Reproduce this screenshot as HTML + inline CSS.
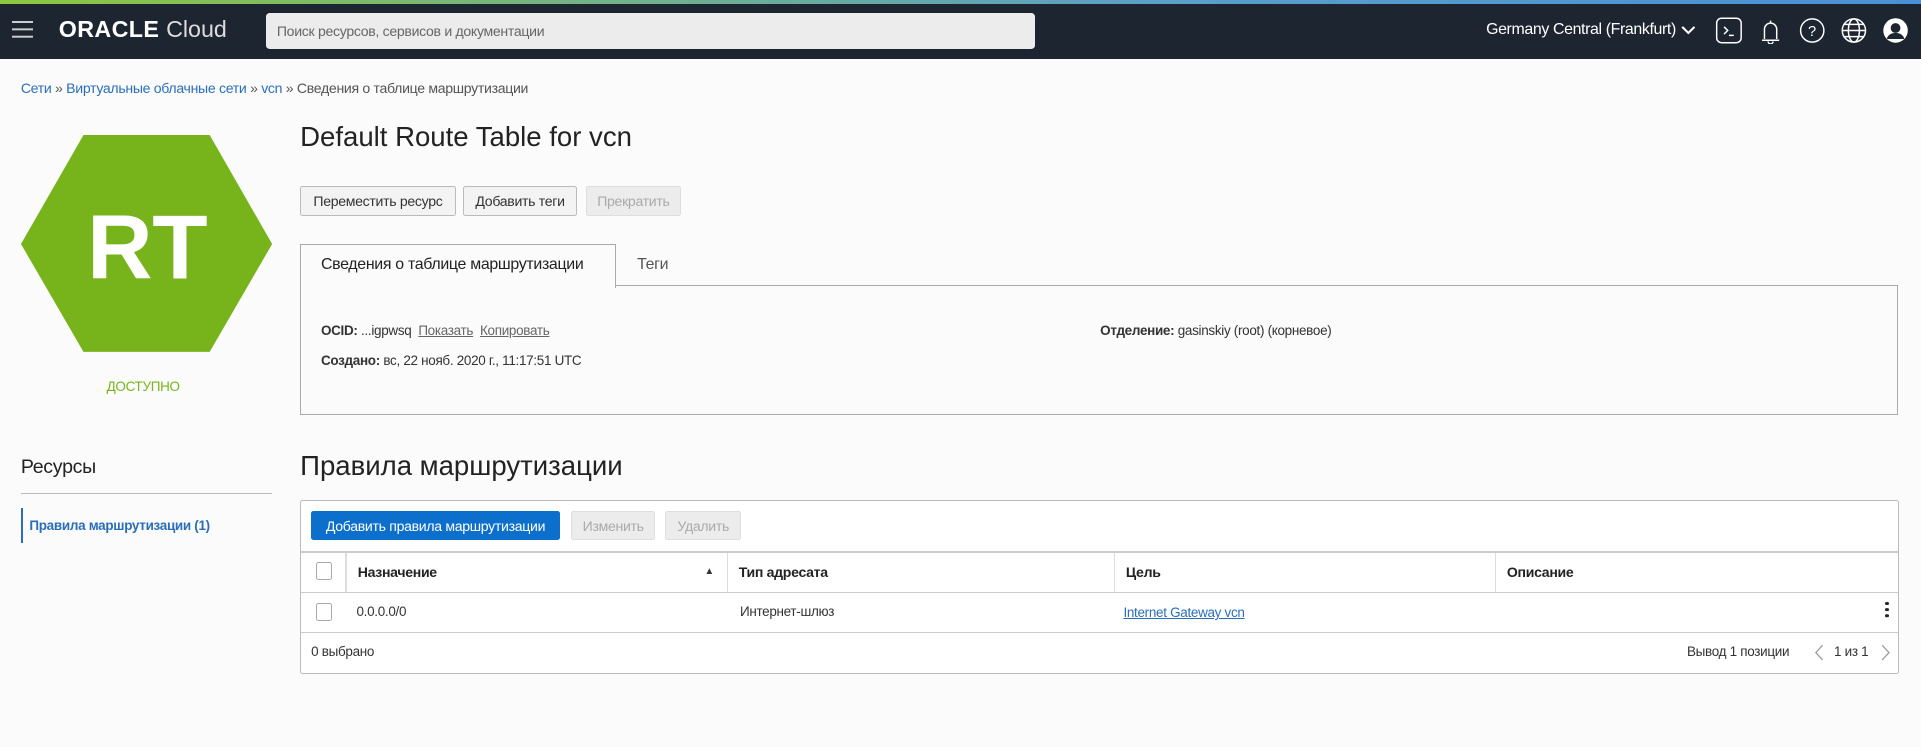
<!DOCTYPE html>
<html><head><meta charset="utf-8"><style>
html,body{margin:0;padding:0;}
body{width:1568px;height:610px;zoom:1.22513;background:#fbfbfb;font-family:"Liberation Sans",Arial,sans-serif;color:#333;position:relative;overflow:hidden;font-size:12px;letter-spacing:-0.25px;}
.a{position:absolute;white-space:nowrap;}
.topline{left:0;top:0;width:1568px;height:3px;background:linear-gradient(90deg,#8cc63f,#5aa0c8 60%,#4b8fd6);}
.hdr{left:0;top:3px;width:1568px;height:45px;background:#1d2531;}
.search{left:217px;top:11px;width:628px;height:29px;background:#ececec;border-radius:3px;}
.btn{position:absolute;height:24px;box-sizing:border-box;border:1px solid #bbb;border-radius:2px;background:#f3f3f3;color:#333;font-size:11.5px;display:flex;align-items:center;justify-content:center;white-space:nowrap;}
.dis{color:#aaa;background:#ececec;border-color:#ddd;}
.link{color:#2a6ebb;}
.th{font-weight:bold;font-size:11.5px;color:#222;}
.cb{position:absolute;width:11px;height:13px;border:1px solid #aaa;border-radius:2px;background:#fff;}
</style></head><body>
<div class="a topline"></div>
<div class="a hdr"></div>
<div class="a" style="left:10px;top:17px;width:17px;height:1.5px;background:#ccc;box-shadow:0 6px 0 #ccc,0 12px 0 #ccc"></div>
<div class="a" style="left:48px;top:13px;color:#fff;font-size:19px;letter-spacing:0.3px"><b style="font-weight:bold">ORACLE</b> <span style="font-size:19px;color:#ddd;letter-spacing:0">Cloud</span></div>
<div class="a search"></div>
<div class="a" style="left:226px;top:19px;color:#666;font-size:11.5px;">Поиск ресурсов, сервисов и документации</div>
<div class="a" style="left:1213px;top:17px;color:#fff;font-size:13px;letter-spacing:-0.3px">Germany Central (Frankfurt)</div>
<svg class="a" style="left:1372px;top:20px" width="12" height="9"><path d="M1 1.5l5 5 5-5" stroke="#fff" stroke-width="1.7" fill="none"/></svg>
<svg class="a" style="left:1398px;top:14px" width="170" height="22" fill="none" stroke="#fff" stroke-width="1.2">
<rect x="3" y="1" width="20" height="20" rx="4"/><path d="M9 8l3 3-3 3M13 15h4"/>
<path d="M40 19h14M42 18v-8a5 5 0 0 1 10 0v8M45 20a2 2 0 0 0 4 0M47 5v-2"/>
<circle cx="81" cy="11" r="9.5"/><text x="77.5" y="15.5" fill="#fff" stroke="none" font-size="12" font-family="Liberation Sans">?</text>
<circle cx="115" cy="11" r="9.5"/><ellipse cx="115" cy="11" rx="4.5" ry="9.5"/><path d="M105.5 11h19M107 6h16M107 16h16"/>
<circle cx="149" cy="11" r="10" fill="#fff" stroke="none"/><circle cx="149" cy="9" r="4" fill="#1d2531" stroke="none"/><path d="M142 18a7 5 0 0 1 14 0" fill="#1d2531" stroke="none"/>
</svg>
<div class="a" style="left:17px;top:65px;font-size:11.5px;color:#555"><span class="link">Сети</span> » <span class="link">Виртуальные облачные сети</span> » <span class="link">vcn</span> » Сведения о таблице маршрутизации</div>
<svg class="a" style="left:17px;top:110px" width="206" height="178"><polygon points="51,0 154,0 205,89 154,177 51,177 0,89" fill="#77b41c"/><text x="103" y="117" text-anchor="middle" fill="#fff" font-size="74" font-weight="bold" font-family="Liberation Sans">RT</text></svg>
<div class="a" style="left:87px;top:309px;color:#77b41c;font-size:11px;">ДОСТУПНО</div>
<div class="a" style="left:17px;top:372px;font-size:16px;color:#222">Ресурсы</div>
<div class="a" style="left:17px;top:402px;width:205px;height:1px;background:#bbb"></div>
<div class="a" style="left:17px;top:415px;width:2px;height:28px;background:#2a6ebb"></div>
<div class="a" style="left:24px;top:423px;font-weight:bold;color:#2a6ebb;font-size:11px">Правила маршрутизации (1)</div>
<div class="a" style="left:245px;top:99px;font-size:22.5px;color:#222;letter-spacing:0">Default Route Table for vcn</div>
<div class="btn" style="left:245px;top:152px;width:127px">Переместить ресурс</div>
<div class="btn" style="left:378px;top:152px;width:93px">Добавить теги</div>
<div class="btn dis" style="left:478px;top:152px;width:78px">Прекратить</div>
<div class="a" style="left:245px;top:233px;width:1304px;height:106px;border:1px solid #aaa;box-sizing:border-box"></div>
<div class="a" style="left:245px;top:199px;width:258px;height:36px;border:1px solid #aaa;border-bottom:none;box-sizing:border-box;background:#fbfbfb"></div>
<div class="a" style="left:262px;top:209px;font-size:13px;color:#222">Сведения о таблице маршрутизации</div>
<div class="a" style="left:520px;top:209px;font-size:13px;color:#555">Теги</div>
<div class="a" style="left:262px;top:264px;font-size:11px"><b>OCID:</b> ...igpwsq &nbsp;<u style="color:#666">Показать</u> &nbsp;<u style="color:#666">Копировать</u></div>
<div class="a" style="left:262px;top:288px;font-size:11px"><b>Создано:</b> вс, 22 нояб. 2020 г., 11:17:51 UTC</div>
<div class="a" style="left:898px;top:264px;font-size:11px"><b>Отделение:</b> gasinskiy (root) (корневое)</div>
<div class="a" style="left:245px;top:367px;font-size:22.5px;color:#222;letter-spacing:0">Правила маршрутизации</div>
<div class="a" style="left:245px;top:408px;width:1305px;height:142px;border:1px solid #bbb;border-radius:2px;box-sizing:border-box;background:#fff"></div>
<div class="btn" style="left:254px;top:417px;width:203px;background:#0c6fcc;border-color:#0c6fcc;color:#fff">Добавить правила маршрутизации</div>
<div class="btn dis" style="left:466px;top:417px;width:69px">Изменить</div>
<div class="btn dis" style="left:543px;top:417px;width:62px">Удалить</div>
<div class="a" style="left:246px;top:450px;width:1303px;height:1px;background:#ccc"></div>
<div class="a" style="left:246px;top:483px;width:1303px;height:1px;background:#ccc"></div>
<div class="a" style="left:246px;top:516px;width:1303px;height:1px;background:#ccc"></div>
<div class="a" style="left:282px;top:451px;width:1px;height:32px;background:#ddd"></div>
<div class="a" style="left:593px;top:451px;width:1px;height:32px;background:#ddd"></div>
<div class="a" style="left:909px;top:451px;width:1px;height:32px;background:#ddd"></div>
<div class="a" style="left:1220px;top:451px;width:1px;height:32px;background:#ddd"></div>
<div class="cb" style="left:258px;top:459px"></div>
<div class="cb" style="left:258px;top:492px"></div>
<div class="a th" style="left:292px;top:460px">Назначение</div>
<div class="a" style="left:575px;top:462px;font-size:8px">▲</div>
<div class="a th" style="left:603px;top:460px">Тип адресата</div>
<div class="a th" style="left:919px;top:460px">Цель</div>
<div class="a th" style="left:1230px;top:460px">Описание</div>
<div class="a" style="left:291px;top:493px;font-size:11px">0.0.0.0/0</div>
<div class="a" style="left:604px;top:493px;font-size:11px">Интернет-шлюз</div>
<div class="a" style="left:917px;top:494px;font-size:11px;color:#2a6ebb;text-decoration:underline">Internet Gateway vcn</div>
<div class="a" style="left:1539px;top:491px;width:3px;height:3px;background:#222;border-radius:2px;box-shadow:0 5px 0 #222,0 10px 0 #222"></div>
<div class="a" style="left:254px;top:526px;font-size:11px">0 выбрано</div>
<div class="a" style="left:1377px;top:526px;font-size:11px">Вывод 1 позиции</div>
<svg class="a" style="left:1481px;top:526px" width="8" height="14"><path d="M7 1L1.5 7 7 13" stroke="#999" fill="none"/></svg>
<div class="a" style="left:1497px;top:526px;font-size:11px">1 из 1</div>
<svg class="a" style="left:1535px;top:526px" width="8" height="14"><path d="M1 1l5.5 6L1 13" stroke="#999" fill="none"/></svg>
</body></html>
